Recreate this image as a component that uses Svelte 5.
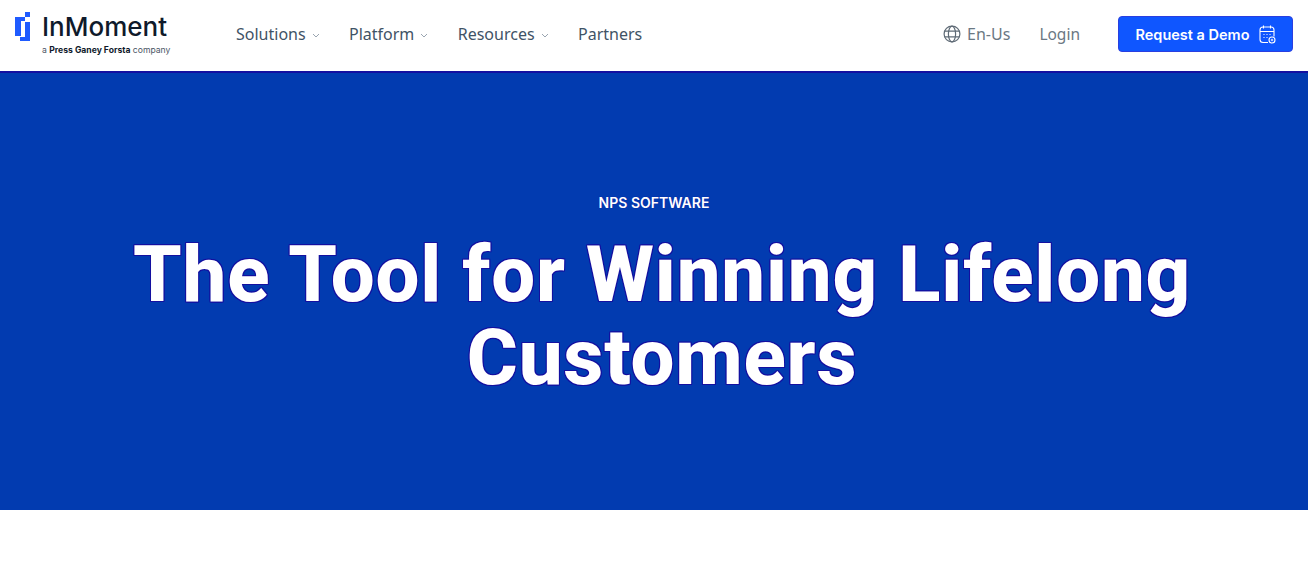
<script>
  const links = [
    { label: 'Solutions', caret: true },
    { label: 'Platform', caret: true },
    { label: 'Resources', caret: true },
    { label: 'Partners', caret: false }
  ];
</script>

<header class="nav">
  <a class="logo" href="#home">
    <svg class="mark" width="18" height="29" viewBox="0 0 18 29" aria-hidden="true">
      <path fill="#1f5bff" d="M0 5h6v19H0zM6 5h4v4H6zM10 0h5v5h-5zM10 10h5v19H5v-4h5z" />
    </svg>
    <span class="logo-text">
      <span class="brand">InMoment</span>
      <span class="tag">a <b>Press Ganey Forsta</b> company</span>
    </span>
  </a>

  <nav class="links">
    {#each links as link}
      <a class="link" href="#menu">
        {link.label}
        {#if link.caret}
          <svg class="caret" width="8" height="5" viewBox="0 0 8 5" aria-hidden="true">
            <path d="M1 1l3 3 3-3" fill="none" stroke="#9aa5b1" stroke-width="1" />
          </svg>
        {/if}
      </a>
    {/each}
  </nav>

  <div class="right">
    <a class="lang" href="#lang">
      <svg width="18" height="18" viewBox="0 0 18 18" fill="none" stroke="#5f6b76" stroke-width="1.2" aria-hidden="true">
        <circle cx="9" cy="9" r="7.9" />
        <ellipse cx="9" cy="9" rx="3.6" ry="7.9" />
        <path d="M1.6 6.2h14.8M1.6 11.8h14.8" />
      </svg>
      En-Us
    </a>
    <a class="login" href="#login">Login</a>
    <a class="demo" href="#demo">
      Request a Demo
      <svg width="17" height="19" viewBox="0 0 17 19" fill="none" stroke="#fff" stroke-width="1.1" aria-hidden="true">
        <path d="M9 17.500H4a3 3 0 0 1-3-3V5a3 3 0 0 1 3-3h8a3 3 0 0 1 3 3v6.500" />
        <path d="M1 6.500h14M4.500 .6v3M11.500 .6v3" />
        <path d="M4.500 9.500h1M7.500 9.500h1M10.500 9.500h1M4.500 12.500h1M7.500 12.500h1" />
        <circle cx="13" cy="15" r="3" />
        <path d="M13 13.800v2.400M11.800 15h2.400" stroke-width=".9" />
      </svg>
    </a>
  </div>
</header>

<section class="hero">
  <p class="eyebrow">NPS SOFTWARE</p>
  <h1>The Tool for Winning Lifelong Customers</h1>
</section>

<div class="after"></div>

<style>
  :global(body) {
    margin: 0;
    background: #fff;
    font-family: "Inter", "Noto Sans", sans-serif;
  }

  a {
    text-decoration: none;
    color: inherit;
  }

  .nav {
    height: 71px;
    display: flex;
    align-items: center;
    padding: 0 15px 3px;
    box-sizing: border-box;
    background: #fff;
  }

  .logo {
    display: flex;
    align-items: flex-start;
    width: 221px;
    flex: none;
    gap: 9px;
  }

  .mark {
    margin-top: -1px;
  }

  .logo-text {
    display: flex;
    flex-direction: column;
  }

  .brand {
    font-family: "Inter", sans-serif;
    font-size: 26px;
    line-height: 27px;
    font-weight: 500;
    color: #0f1a2b;
  }

  .tag {
    font-family: "Inter", sans-serif;
    font-size: 8.600px;
    line-height: 11px;
    margin-top: 5px;
    color: #4a5564;
  }

  .tag b {
    color: #0f1a2b;
    font-weight: 700;
  }

  .links {
    display: flex;
    align-items: center;
    gap: 29.400px;
  }

  .link {
    display: flex;
    align-items: center;
    gap: 6px;
    font-family: "Noto Sans", sans-serif;
    font-size: 16px;
    color: #3f5366;
  }

  .caret {
    margin-top: 3px;
  }

  .right {
    margin-left: auto;
    display: flex;
    align-items: center;
  }

  .lang {
    display: flex;
    align-items: center;
    gap: 6px;
    font-family: "Noto Sans", sans-serif;
    font-size: 16px;
    color: #6b7883;
  }

  .login {
    margin-left: 29px;
    font-family: "Noto Sans", sans-serif;
    font-size: 15.500px;
    color: #6b7883;
  }

  .demo {
    margin-left: 38px;
    width: 175px;
    height: 36px;
    box-sizing: border-box;
    display: flex;
    align-items: center;
    justify-content: center;
    gap: 9px;
    background: #0f56ff;
    border: 1px solid #2a3fe0;
    border-radius: 4px;
    color: #fff;
    font-size: 14.500px;
    font-weight: 600;
  }

  .hero {
    height: 439px;
    box-sizing: border-box;
    background: #023bb0;
    border-top: 2px solid #1410a0;
    padding-top: 121px;
    text-align: center;
    color: #fff;
  }

  .eyebrow {
    margin: 0;
    font-size: 14px;
    line-height: 17px;
    font-weight: 600;
    text-shadow: 0 0 1px #1410a0;
  }

  h1 {
    box-sizing: border-box;
    margin: 22px auto 0;
    max-width: 1116px;
    padding-left: 16px;
    font-family: "Roboto", sans-serif;
    font-size: 78px;
    line-height: 83px;
    font-weight: 800;
    letter-spacing: 0.8px;
    text-shadow: 1px 0 #1410a0, -1px 0 #1410a0, 0 1px #1410a0, 0 -1px #1410a0,
      1px 1px #1410a0, -1px 1px #1410a0, 1px -1px #1410a0, -1px -1px #1410a0;
  }

  .after {
    height: 63px;
    background: #fff;
  }
</style>
